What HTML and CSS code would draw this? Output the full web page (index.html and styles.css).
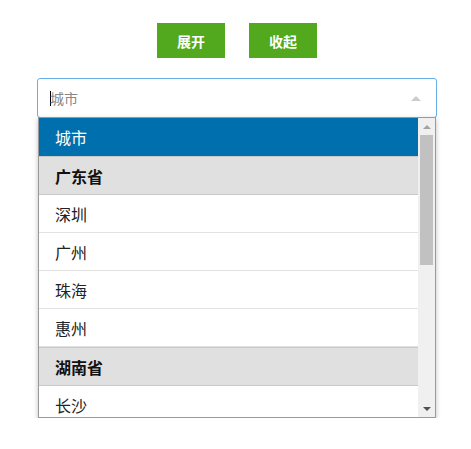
FILE: index.html
```html
<!DOCTYPE html>
<html lang="zh">
<head>
<meta charset="utf-8">
<link rel="stylesheet" href="styles.css">
</head>
<body>
<div class="toolbar">
  <button class="btn">展开</button>
  <button class="btn">收起</button>
</div>
<div class="combo">
  <div class="input">
    <span class="caret"></span><span class="placeholder">城市</span>
    <span class="arrow"></span>
  </div>
  <div class="dropdown">
    <ul class="list">
      <li class="opt selected">城市</li>
      <li class="opt group">广东省</li>
      <li class="opt">深圳</li>
      <li class="opt">广州</li>
      <li class="opt">珠海</li>
      <li class="opt">惠州</li>
      <li class="opt group">湖南省</li>
      <li class="opt">长沙</li>
    </ul>
    <div class="scrollbar">
      <div class="sb-btn"><span class="tri up"></span></div>
      <div class="sb-track"><div class="sb-thumb"></div></div>
      <div class="sb-btn"><span class="tri down"></span></div>
    </div>
  </div>
</div>
</body>
</html>
```
FILE: styles.css
```css
html, body {
  margin: 0;
  padding: 0;
  background: #fff;
  font-family: "Noto Sans CJK SC", "Noto Sans", sans-serif;
}
.toolbar {
  display: flex;
  justify-content: center;
  gap: 24px;
  padding: 23px 0 0 3px;
}
.btn {
  width: 68px;
  height: 35px;
  border: 0;
  margin: 0;
  padding: 0;
  background: #52a91d;
  color: #fff;
  font-family: inherit;
  font-size: 14px;
  font-weight: bold;
}
.combo {
  margin: 20px 0 0 37px;
  width: 400px;
}
.input {
  box-sizing: border-box;
  height: 40px;
  border: 1px solid #66afe9;
  border-radius: 3px;
  display: flex;
  align-items: center;
  padding-left: 12px;
  padding-right: 15px;
  font-size: 14px;
  background: #fff;
}
.caret {
  width: 1px;
  height: 15px;
  background: #000;
  margin-right: -1px;
}
.placeholder {
  color: #888;
  flex: 1;
}
.arrow {
  width: 0;
  height: 0;
  border-left: 5px solid transparent;
  border-right: 5px solid transparent;
  border-bottom: 5px solid #ccc;
}
.dropdown {
  box-sizing: border-box;
  margin: -1px 1px 0 1px;
  height: 301px;
  border: 1px solid #9a9a9a;
  background: #fff;
  display: flex;
  box-shadow: 0 2px 5px rgba(0,0,0,0.25);
  overflow: hidden;
}
.list {
  list-style: none;
  margin: 0;
  padding: 0;
  flex: 1;
  overflow: hidden;
}
.opt {
  height: 37px;
  border-bottom: 1px solid #e2e2e2;
  padding-left: 16px;
  display: flex;
  align-items: center;
  font-size: 16px;
  color: #222;
}
.opt.selected {
  background: #006fad;
  color: #fff;
  height: 38px;
  border-bottom: 0;
}
.opt.group {
  background: #e0e0e0;
  border-top: 1px solid #c8c8c8;
  border-bottom: 1px solid #c8c8c8;
  font-weight: bold;
  color: #111;
}
.scrollbar {
  width: 17px;
  background: #f0f0f0;
  display: flex;
  flex-direction: column;
}
.sb-btn {
  height: 17px;
  display: flex;
  align-items: center;
  justify-content: center;
}
.sb-track {
  flex: 1;
  padding: 0 2px;
}
.sb-thumb {
  height: 130px;
  background: #c1c1c1;
}
.tri {
  width: 0;
  height: 0;
  border-left: 4px solid transparent;
  border-right: 4px solid transparent;
}
.tri.up {
  border-bottom: 4px solid #a3a3a3;
}
.tri.down {
  border-top: 4px solid #505050;
}
```
